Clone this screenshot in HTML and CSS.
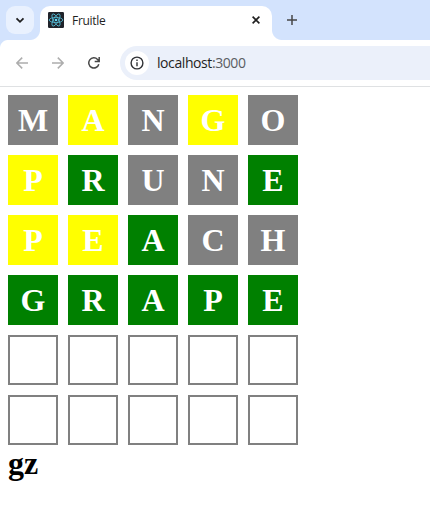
FILE: index.html
```html
<!DOCTYPE html>
<html lang="en">
<head>
<meta charset="utf-8">
<title>Fruitle</title>
<link rel="stylesheet" href="styles.css">
</head>
<body>
<header class="tabstrip">
  <div class="tab-search">
    <svg width="28" height="28" viewBox="0 0 28 28"><path d="M10.5 12.3l3.5 3.5 3.5-3.5" fill="none" stroke="#1f1f1f" stroke-width="1.8"/></svg>
  </div>
  <div class="tab">
    <svg class="favicon" width="16" height="16" viewBox="0 0 16 16">
      <rect width="16" height="16" rx="1.2" fill="#20232a"/>
      <g fill="none" stroke="#53b9d3" stroke-width=".85">
        <ellipse cx="8" cy="8" rx="6.8" ry="2.6"/>
        <ellipse cx="8" cy="8" rx="6.8" ry="2.6" transform="rotate(60 8 8)"/>
        <ellipse cx="8" cy="8" rx="6.8" ry="2.6" transform="rotate(120 8 8)"/>
      </g>
      <circle cx="8" cy="8" r="1.3" fill="#61dafb"/>
    </svg>
    <span class="tab-title">Fruitle</span>
    <svg class="tab-close" width="8" height="8" viewBox="0 0 8 8"><path d="M.6.6l6.8 6.8M7.4.6L.6 7.4" stroke="#1f1f1f" stroke-width="1.6"/></svg>
  </div>
  <svg class="new-tab" width="10" height="10" viewBox="0 0 10 10"><path d="M5 0v10M0 5h10" stroke="#474747" stroke-width="1.5"/></svg>
</header>
<nav class="toolbar">
  <svg class="nav-icon" width="12" height="12" viewBox="0 0 12 12"><path d="M12 6H1M6.2.6L.9 6l5.3 5.4" fill="none" stroke="#adadad" stroke-width="1.5"/></svg>
  <svg class="nav-icon" width="12" height="12" viewBox="0 0 12 12"><path d="M0 6h11M5.8.6L11.1 6l-5.3 5.4" fill="none" stroke="#adadad" stroke-width="1.5"/></svg>
  <svg class="nav-icon" width="12" height="12" viewBox="0 0 12 12"><path d="M10.8 7.2A5.1 5.1 0 1 1 9.6 2.4L11 4M11.2 0v4.5H6.7" fill="none" stroke="#474747" stroke-width="1.5"/></svg>
  <div class="omnibox">
    <span class="site-info">
      <svg width="14" height="14" viewBox="0 0 14 14"><circle cx="7" cy="7" r="5.9" fill="none" stroke="#303236" stroke-width="1.4"/><path d="M7 6.2v4M7 3.6v1.5" stroke="#303236" stroke-width="1.4"/></svg>
    </span>
    <span class="url">localhost<span class="port">:3000</span></span>
  </div>
</nav>
<main class="page">
  <div class="board">
    <div class="cell absent">M</div><div class="cell present">A</div><div class="cell absent">N</div><div class="cell present">G</div><div class="cell absent">O</div>
    <div class="cell present">P</div><div class="cell correct">R</div><div class="cell absent">U</div><div class="cell absent">N</div><div class="cell correct">E</div>
    <div class="cell present">P</div><div class="cell present">E</div><div class="cell correct">A</div><div class="cell absent">C</div><div class="cell absent">H</div>
    <div class="cell correct">G</div><div class="cell correct">R</div><div class="cell correct">A</div><div class="cell correct">P</div><div class="cell correct">E</div>
    <div class="cell"></div><div class="cell"></div><div class="cell"></div><div class="cell"></div><div class="cell"></div>
    <div class="cell"></div><div class="cell"></div><div class="cell"></div><div class="cell"></div><div class="cell"></div>
  </div>
  <h1 class="guess">gz</h1>
</main>
</body>
</html>
```
FILE: styles.css
```css
* { box-sizing: border-box; }
body {
  margin: 0;
  background: #fff;
  overflow: hidden;
}
svg { display: block; flex: none; }

.tabstrip {
  display: flex;
  height: 40px;
  padding: 6px 0 0 6px;
  background: #d3e3fd;
}
.tab-search {
  position: relative;
  z-index: 1;
  width: 28px;
  height: 28px;
  border-radius: 9px;
  background: #e9f1fe;
}
.tab {
  position: relative;
  display: flex;
  align-items: center;
  width: 232px;
  height: 34px;
  margin-left: 6px;
  padding: 0 12px 6px 8px;
  border-radius: 10px 10px 0 0;
  background: #fff;
}
.tab::before,
.tab::after {
  content: "";
  position: absolute;
  bottom: 0;
  width: 10px;
  height: 10px;
}
.tab::before {
  left: -10px;
  background: radial-gradient(circle at 0 0, #d3e3fd 9.5px, #fff 10.5px);
}
.tab::after {
  right: -10px;
  background: radial-gradient(circle at 100% 0, #d3e3fd 9.5px, #fff 10.5px);
}
.tab-title {
  flex: 1;
  margin-left: 8px;
  padding-top: 2px;
  font: 12px/16px "Open Sans", "Noto Sans", sans-serif;
  letter-spacing: -0.3px;
  color: #1f1f1f;
}
.new-tab { margin: 9px 0 0 15px; }

.toolbar {
  position: relative;
  display: flex;
  align-items: center;
  gap: 24px;
  height: 47px;
  padding: 0 0 1px 16px;
  border-bottom: 1px solid #dfe1e3;
  background: #fff;
}
.toolbar::before {
  content: "";
  position: absolute;
  left: 0;
  top: 0;
  width: 8px;
  height: 8px;
  background: radial-gradient(circle at 100% 100%, #fff 7.5px, #d3e3fd 8.5px);
}
.omnibox {
  display: flex;
  flex: 1;
  align-items: center;
  height: 34px;
  margin-left: -4px;
  margin-top: 1px;
  margin-right: -20px;
  padding-left: 5px;
  border-radius: 17px 0 0 17px;
  background: #ebf0fa;
}
.site-info {
  display: grid;
  place-items: center;
  width: 24px;
  height: 24px;
  border-radius: 50%;
  background: #fff;
}
.url {
  margin-left: 8px;
  font: 14px/20px "Open Sans", "Noto Sans", sans-serif;
  letter-spacing: -0.42px;
  color: #1f1f1f;
}
.port { color: #5a5d62; }

.page {
  padding: 8px;
  font-family: "Liberation Serif", serif;
}
.board {
  display: grid;
  grid-template-columns: repeat(5, 50px);
  grid-auto-rows: 50px;
  gap: 10px;
}
.cell {
  display: flex;
  align-items: center;
  justify-content: center;
  border: 2px solid #808080;
  color: #fff;
  font-size: 32px;
  line-height: 36px;
  font-weight: bold;
}
.absent { background: #808080; }
.present { background: #ff0; border-color: #ff0; }
.correct { background: #008000; border-color: #008000; }
.guess {
  margin: 0;
  color: #000;
  font-size: 32px;
  line-height: 36px;
  font-weight: bold;
}
```
